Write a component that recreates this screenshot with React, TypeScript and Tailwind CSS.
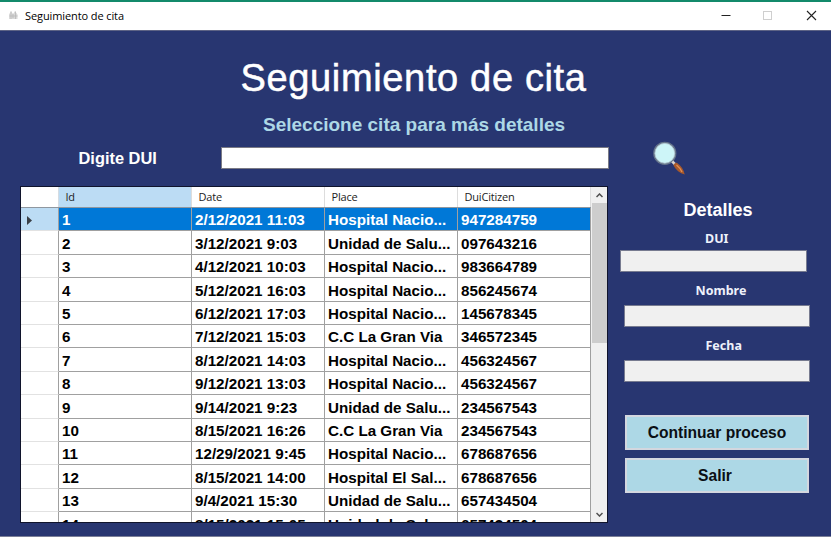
import React from "react";

const rows: [string, string, string, string][] = [
  ["1", "2/12/2021 11:03", "Hospital Nacio...", "947284759"],
  ["2", "3/12/2021 9:03", "Unidad de Salu...", "097643216"],
  ["3", "4/12/2021 10:03", "Hospital Nacio...", "983664789"],
  ["4", "5/12/2021 16:03", "Hospital Nacio...", "856245674"],
  ["5", "6/12/2021 17:03", "Hospital Nacio...", "145678345"],
  ["6", "7/12/2021 15:03", "C.C La Gran Via", "346572345"],
  ["7", "8/12/2021 14:03", "Hospital Nacio...", "456324567"],
  ["8", "9/12/2021 13:03", "Hospital Nacio...", "456324567"],
  ["9", "9/14/2021 9:23", "Unidad de Salu...", "234567543"],
  ["10", "8/15/2021 16:26", "C.C La Gran Via", "234567543"],
  ["11", "12/29/2021 9:45", "Hospital Nacio...", "678687656"],
  ["12", "8/15/2021 14:00", "Hospital El Sal...", "678687656"],
  ["13", "9/4/2021 15:30", "Unidad de Salu...", "657434504"],
  ["14", "8/15/2021 15:05", "Unidad de Salu...", "657434504"],
];

const headers = ["Id", "Date", "Place", "DuiCitizen"];

function TitleBar() {
  return (
    <header className="flex h-[29px] shrink-0 items-center border-b border-[#5d6385] bg-white pl-2 font-['Open_Sans',sans-serif]">
      <svg className="mb-px" width="11" height="11" viewBox="0 0 11 11">
        <path d="M1 4.500 3 1 5 4 7 1 9.500 4.500V9H1Z" fill="#dadada" />
        <path d="M3 1.500v7.500M5 4v4M7.500 1.500v7.500M1.500 6h8" stroke="#b9b9b9" strokeWidth="0.8" />
      </svg>
      <span className="ml-1.5 text-[11px] tracking-[-0.1px] text-black">Seguimiento de cita</span>
      <svg className="ml-auto" width="114" height="28" viewBox="0 0 114 28" fill="none">
        <path d="M4.500 13.500h9" stroke="#222" />
        <rect x="46.500" y="9.500" width="8" height="8" stroke="#cfcfcf" />
        <path d="m90 9 9 9M99 9l-9 9" stroke="#222" strokeWidth="1.1" />
      </svg>
    </header>
  );
}

function Magnifier() {
  return (
    <svg width="34" height="36" viewBox="0 0 34 36">
      <circle cx="12.800" cy="13.300" r="10.800" fill="#cdf5f8" stroke="#65748a" strokeWidth="1.600" />
      <circle cx="12.800" cy="13.300" r="9.900" fill="none" stroke="#b5c9d3" strokeWidth="0.8" />
      <path d="m20.300 21.500 3 3" stroke="#d8d3d0" strokeWidth="2.600" />
      <path d="M21.500 25.500c.4-1.800 1.700-2.900 3.300-2.800 4 2.600 7 6.800 7.900 11.800-4.800-1.400-9-4.500-11.200-9Z" fill="#a9592b" />
      <path d="M24.500 25c2.500 2 4.300 4.300 5.500 7" fill="none" stroke="#e08f55" strokeWidth="1.300" />
    </svg>
  );
}

function DataGrid() {
  return (
    <div className="flex h-[337px] w-[588px] border border-[#10142c] bg-white">
      <div className="flex h-full w-[570px] flex-col overflow-hidden">
        <div className="flex h-[21px] shrink-0 border-b border-[#8f979f] font-['Open_Sans',sans-serif] text-[11px] tracking-[-0.2px]">
          <div className="w-[38px] shrink-0 border-r border-[#d5dce2]" />
          {headers.map((h, i) => (
            <div
              key={h}
              className={`flex w-[133px] shrink-0 items-center border-r border-[#dddddd] pt-px pl-[6.5px] text-[#1c1c1c] ${i === 0 ? "bg-[#bcdcf4]" : ""}`}
            >
              {h}
            </div>
          ))}
        </div>
        {rows.map((row, r) => (
          <div key={r} className="flex h-[23.42px] shrink-0 text-[15.2px] font-bold">
            <div
              className={`flex w-[38px] shrink-0 items-center border-r border-b border-r-[#a0a0a0] border-b-[#e2e2e2] pt-[2px] pl-[6px] ${r === 0 ? "bg-[#bcdcf4]" : ""}`}
            >
              {r === 0 && (
                <svg width="5" height="9" viewBox="0 0 5 9">
                  <path d="M0 0 5 4.500 0 9Z" fill="#3a3f46" />
                </svg>
              )}
            </div>
            {row.map((cell, c) => (
              <div
                key={c}
                className={`flex w-[133px] shrink-0 items-center border-r border-b border-[#a0a0a0] pl-[3px] pt-[3px] whitespace-nowrap ${r === 0 ? "bg-[#0078d7] text-white" : "text-black"}`}
              >
                {cell}
              </div>
            ))}
          </div>
        ))}
      </div>
      <div className="flex flex-1 flex-col items-center bg-[#f0f0f0]">
        <div className="flex h-4 items-center">
          <svg width="7" height="5" viewBox="0 0 7 5" fill="none">
            <path d="m.5 4 3-3 3 3" stroke="#505050" strokeWidth="1.500" />
          </svg>
        </div>
        <div className="h-[140px] w-[15px] bg-[#cdcdcd]" />
        <div className="mt-auto flex h-4 items-center">
          <svg width="7" height="5" viewBox="0 0 7 5" fill="none">
            <path d="m.5 1 3 3 3-3" stroke="#505050" strokeWidth="1.500" />
          </svg>
        </div>
      </div>
    </div>
  );
}

const labelClass = "font-['Noto_Sans',sans-serif] text-[12.5px] leading-4 font-bold text-[#eef1fb]";
const fieldClass = "h-[22px] border border-[#777b90] bg-[#f0f0f0]";
const buttonClass =
  "flex h-[35px] w-[184px] items-center justify-center border-2 border-[#d3d7df] bg-[#add8e6] text-[15.6px] font-bold text-[#0a0f14]";

function Details() {
  return (
    <aside className="flex w-[223px] flex-col">
      <div className="ml-[44px] mt-[-1px] h-9">
        <Magnifier />
      </div>
      <h2 className="ml-[75.5px] mt-[24px] text-[18px] leading-5 font-bold text-white">Detalles</h2>
      <div className={`${labelClass} ml-[97px] mt-[11px]`}>DUI</div>
      <div className={`${fieldClass} ml-[12px] mt-[3px] w-[187px]`} />
      <div className={`${labelClass} ml-[87.5px] mt-[11px]`}>Nombre</div>
      <div className={`${fieldClass} ml-[16px] mt-[6px] w-[186px]`} />
      <div className={`${labelClass} ml-[97.5px] mt-[11px]`}>Fecha</div>
      <div className={`${fieldClass} ml-[16px] mt-[6px] w-[186px]`} />
      <button className={`${buttonClass} ml-[17px] mt-[33px]`}>Continuar proceso</button>
      <button className={`${buttonClass} ml-[17px] mt-[8px] pr-1`}>Salir</button>
    </aside>
  );
}

export default function App() {
  return (
    <div className="flex h-[537px] w-[831px] flex-col overflow-hidden border-t-2 border-[#138a6b] bg-[#283671] font-['Liberation_Sans',Arial,sans-serif]">
      <TitleBar />
      <main className="flex h-[505px] shrink-0 flex-col">
        <h1 className="ml-[240.5px] mt-[25px] text-[38px] leading-[44px] tracking-[0.65px] whitespace-nowrap text-white [-webkit-text-stroke:0.5px_white]">
          Seguimiento de cita
        </h1>
        <p className="ml-[263px] mt-[13px] text-[19px] leading-6 font-bold whitespace-nowrap text-[#add8e6]">
          Seleccione cita para más detalles
        </p>
        <div className="mt-[4px] flex">
          <div className="flex w-[608px] shrink-0 flex-col">
            <div className="mt-[6px] flex h-[22px] items-center">
              <label className="w-[221px] shrink-0 pl-[78.5px] text-[16.4px] font-bold text-white">Digite DUI</label>
              <div className="h-[22px] w-[388px] shrink-0 border border-[#7a7a85] bg-white" />
            </div>
            <div className="ml-5 mt-[17px]">
              <DataGrid />
            </div>
          </div>
          <Details />
        </div>
      </main>
      <div className="h-px shrink-0 bg-[#7b7f98]" />
    </div>
  );
}
